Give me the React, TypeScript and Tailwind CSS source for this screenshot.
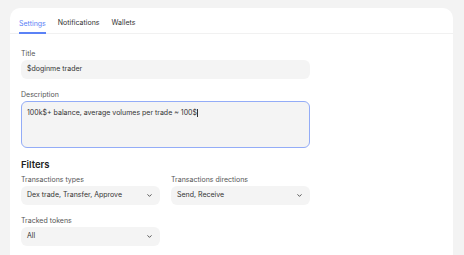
import { ChevronDown } from 'lucide-react'

const font = { fontFamily: 'Inter, "Noto Sans", sans-serif' }

function Select({ value }: { value: string }) {
  return (
    <div className="h-[19px] w-[139px] rounded-[6px] bg-[#f4f4f4] px-[6px] flex items-center justify-between text-[7px] text-[#333]">
      <span>{value}</span>
      <ChevronDown size={7} strokeWidth={3} className="text-[#444] mr-[1px]" />
    </div>
  )
}

export default function App() {
  return (
    <div className="w-[464px] h-[255px] bg-[#f3f3f3] overflow-hidden pt-[8px]" style={font}>
      <div className="mx-[10px] w-[443px] h-[260px] bg-white rounded-t-[10px]">
        {/* Tabs */}
        <div className="h-[26px] border-b border-[#f1f1f1] px-[9px] flex items-end gap-[12px] text-[7px]">
          <div className="h-full flex items-center border-b-2 border-[#5b82f6] text-[#5b82f6] -mb-px pt-[7px]">Settings</div>
          <div className="h-full flex items-center text-[#333] pt-[6px]">Notifications</div>
          <div className="h-full flex items-center text-[#333] pt-[6px]">Wallets</div>
        </div>

        <div className="px-[11px] pt-[15px]">
          <div className="text-[7px] leading-[10px] text-[#555] mb-px">Title</div>
          <div className="h-[19px] w-[289px] rounded-[6px] bg-[#f4f4f4] px-[6px] flex items-center text-[7px] text-[#333]">
            $doginme trader
          </div>

          <div className="text-[7px] leading-[10px] text-[#555] mt-[11px] mb-px">Description</div>
          <div className="h-[47px] w-[289px] rounded-[6px] bg-[#f4f4f4] border border-[#93acf7] px-[5px] pt-[6px] text-[7px] leading-[10px] text-[#333]">
            100k$+ balance, average volumes per trade ~ 100$<span className="inline-block w-px h-[8px] bg-[#333] align-middle" />
          </div>

          <div className="text-[9.5px] leading-[14px] font-semibold text-[#222] mt-[10px]">Filters</div>

          <div className="flex gap-[11px] mt-[3px]">
            <div>
              <div className="text-[7px] leading-[10px] text-[#555] mb-px">Transactions types</div>
              <Select value="Dex trade, Transfer, Approve" />
            </div>
            <div>
              <div className="text-[7px] leading-[10px] text-[#555] mb-px">Transactions directions</div>
              <Select value="Send, Receive" />
            </div>
          </div>

          <div className="text-[7px] leading-[10px] text-[#555] mt-[11px] mb-px">Tracked tokens</div>
          <Select value="All" />
        </div>
      </div>
    </div>
  )
}
